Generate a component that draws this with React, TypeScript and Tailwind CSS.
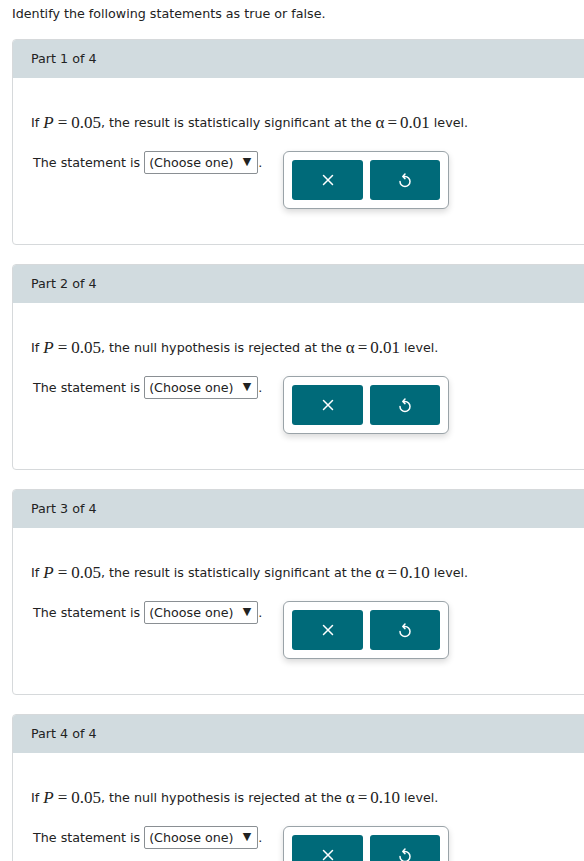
import React from "react";

const parts = [
  { n: 1, mid: "the result is statistically significant", a: "0.01" },
  { n: 2, mid: "the null hypothesis is rejected", a: "0.01" },
  { n: 3, mid: "the result is statistically significant", a: "0.10" },
  { n: 4, mid: "the null hypothesis is rejected", a: "0.10" },
];

const XIcon = () => (
  <svg width="12" height="12" viewBox="0 0 12 12" fill="none" stroke="white" strokeWidth="1.5" strokeLinecap="round">
    <path d="M1.5 1.5 L10.5 10.5 M10.5 1.5 L1.5 10.5" />
  </svg>
);

const UndoIcon = () => (
  <svg width="14" height="16" viewBox="0 0 14 16" fill="none" stroke="white" strokeWidth="1.5" strokeLinecap="round" strokeLinejoin="round">
    <path d="M5.5 4.5 H7 A5 5 0 1 1 2 9.5" />
    <path d="M7 2 L4.8 4.5 L7 6.6" />
  </svg>
);

function Part({ n, mid, a }: { n: number; mid: string; a: string }) {
  return (
    <div className="w-[620px] ml-[12px] border border-[#d6d9db] rounded-[4px] overflow-hidden">
      <div className="h-[38px] bg-[#d1dbdf] flex items-center pl-[18px] text-[12.7px] text-[#222]">
        Part {n} of 4
      </div>
      <div className="pl-[18px] pt-[35px] pb-[35px]">
        <div className="h-[20px] flex items-center text-[12.7px] text-[#222] whitespace-nowrap">
          <span>If&nbsp;</span>
          <span className="font-['Liberation_Serif',serif] text-[17px] italic">P</span>
          <span className="font-['Liberation_Serif',serif] text-[17px] mx-[4px]">=</span>
          <span className="font-['Liberation_Serif',serif] text-[17px]">0.05</span>
          <span>, {mid} at the&nbsp;</span>
          <span className="font-['Liberation_Serif',serif] text-[17px]">α</span>
          <span className="font-['Liberation_Serif',serif] text-[17px] mx-[3px]">=</span>
          <span className="font-['Liberation_Serif',serif] text-[17px]">{a}</span>
          <span>&nbsp;level.</span>
        </div>
        <div className="mt-[18px] flex items-start">
          <div className="flex items-center h-[23px] text-[12.7px] text-[#222] pl-[2px]">
            <span>The statement is&nbsp;</span>
            <div className="h-[23px] w-[114px] border border-[#8a8f93] rounded-[2px] bg-white flex items-center pl-[4px] pr-[6px] justify-between">
              <span>(Choose one)</span>
              <span className="text-[11px]">▼</span>
            </div>
            <span>.</span>
          </div>
          <div className="ml-[21px] border border-[#9aa3a8] rounded-[6px] p-[8px] flex gap-[7px] bg-white shadow-[0_3px_6px_rgba(0,0,0,0.15)]">
            <div className="w-[71px] h-[40px] bg-[#006a79] rounded-[3px] flex items-center justify-center">
              <XIcon />
            </div>
            <div className="w-[70px] h-[40px] bg-[#006a79] rounded-[3px] flex items-center justify-center">
              <UndoIcon />
            </div>
          </div>
        </div>
      </div>
    </div>
  );
}

export default function App() {
  return (
    <div className="w-[584px] h-[861px] overflow-hidden bg-white font-['DejaVu_Sans',Verdana,sans-serif]">
      <div className="pt-[6px] pl-[12px] h-[39px] text-[12.7px] text-[#222] leading-[16px]">
        Identify the following statements as true or false.
      </div>
      <div className="flex flex-col gap-[19px]">
        {parts.map((p) => (
          <Part key={p.n} {...p} />
        ))}
      </div>
    </div>
  );
}
